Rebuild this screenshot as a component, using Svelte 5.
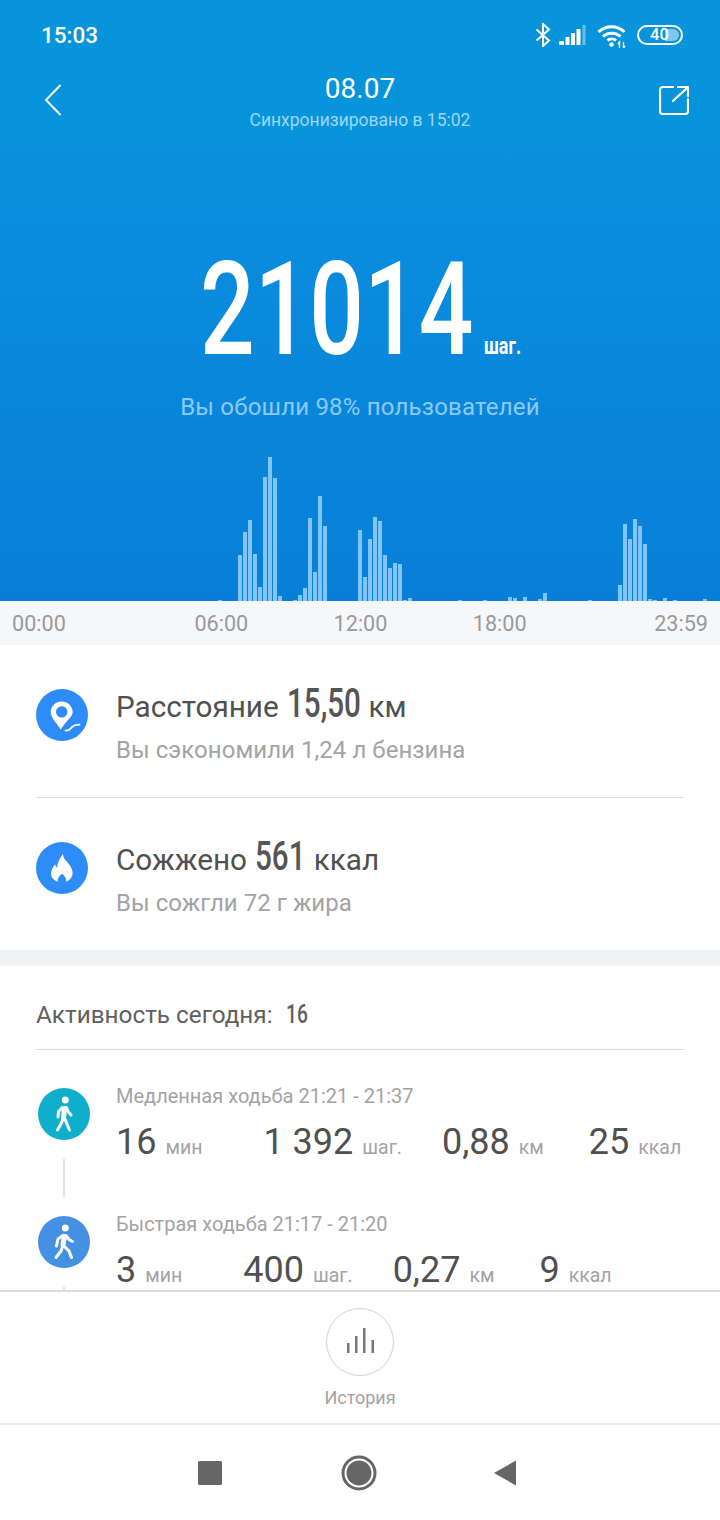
<script>
  const heights = {43:1,47:46,48:69,49:81,50:47,51:14,52:124,53:144,54:123,55:5,58:1,59:6,60:13,61:83,62:29,63:105,64:75,71:71,72:24,73:62,74:84,75:80,76:46,77:33,78:38,79:37,80:1,81:3,91:1,96:1,101:4,102:3,104:4,107:2,108:8,117:1,123:16,124:77,125:62,126:82,127:75,128:57,129:2,130:1,132:3,134:1,140:2};
  const bars = Array.from({ length: 141 }, (_, i) => heights[i] || 0);
  const activities = [
    { name: 'Медленная ходьба 21:21 - 21:37', color: 'teal', fast: false, stats: [['16','мин'],['1 392','шаг.'],['0,88','км'],['25','ккал']] },
    { name: 'Быстрая ходьба 21:17 - 21:20', color: 'blue', fast: true, stats: [['3','мин'],['400','шаг.'],['0,27','км'],['9','ккал']] }
  ];
</script>

<div class="page">
  <header class="top">
    <div class="status">
      <span class="clock">15:03</span>
      <div class="sys">
        <svg class="bt" width="16" height="24" viewBox="0 0 16 24" fill="none" stroke="#fff" stroke-width="2"><path d="M1.500 6.500 14 17.500 8 23V1l6 5.500L1.500 17.500"/></svg>
        <svg class="sig" width="27" height="20" viewBox="0 0 27 20" fill="#fff"><rect x="0" y="16" width="5" height="4" rx="1"/><rect x="6.500" y="12" width="4" height="8"/><rect x="12" y="8" width="4" height="12"/><rect x="17.500" y="4" width="4" height="16"/><rect x="23.500" y="0" width="3" height="20" opacity=".4"/></svg>
        <svg class="wifi" width="30" height="24" viewBox="0 0 30 24" fill="none" stroke="#fff" stroke-width="3"><path d="M1.500 8c7-7 19-7 26 0"/><path d="M6 12.500c4.500-4.500 13-4.500 17.500 0"/><path d="M10.500 16.500c2.300-2 6-2 8.500 0"/><circle cx="14.500" cy="20.500" r="2.200" fill="#fff" stroke="none"/><path d="M22.500 24v-6l-1.500 2M26.500 18v6l1.500-2" stroke-width="1.300"/></svg>
        <div class="batt"><i></i><b>40</b></div>
      </div>
    </div>
    <div class="nav">
      <svg class="back" width="18" height="32" viewBox="0 0 18 32" fill="none" stroke="#fff" stroke-width="2"><path d="M16.500 1 2 16l14.500 15"/></svg>
      <div class="titles">
        <div class="date">08.07</div>
        <div class="sync">Синхронизировано в 15:02</div>
      </div>
      <svg class="share" width="30" height="30" viewBox="0 0 30 30" fill="none" stroke="#fff" stroke-width="2.200" stroke-linecap="round" stroke-linejoin="round"><path d="M14 2H4a3 3 0 0 0-3 3v21a3 3 0 0 0 3 3h22a3 3 0 0 0 3-3v-12"/><path d="M14 16 29 2M19 2h10v9"/></svg>
    </div>
  </header>

  <section class="hero">
    <div class="total">
      <span class="big">21014</span>
      <span class="unit">шаг.</span>
    </div>
    <p class="beat">Вы обошли 98% пользователей</p>
    <div class="chart">
      {#each bars as h}
        <i class="bar" style="height:{h}px"></i>
      {/each}
    </div>
  </section>

  <div class="axis">
    <span>00:00</span>
    <div class="mid"><span>06:00</span><span>12:00</span><span>18:00</span></div>
    <span>23:59</span>
  </div>

  <main class="scroll">
    <section class="summary">
      <div class="row">
        <div class="ic">
          <svg width="52" height="52" viewBox="0 0 52 52"><circle cx="26" cy="26" r="26" fill="#2e8cf8"/><path fill="#fff" fill-rule="evenodd" d="M25.700 12.500c-6 0-11 4.800-11 10.500 0 6 6 11 10 17.500 1.500-2.500 3.500-5 5.500-7.500 3-3.500 6.500-6.500 6.500-10 0-5.700-5-10.500-11-10.500zm0 4.700a5.700 5.700 0 1 1 0 11.400 5.700 5.700 0 0 1 0-11.400z"/><path fill="none" stroke="#2e8cf8" stroke-width="5" d="M29.500 41.500c3 1 4.500-1.500 6.500-3.500 1.500-1.500 3-2.500 7.500-2.300"/><path fill="none" stroke="#fff" stroke-width="1.800" stroke-linecap="round" d="M29.500 41.500c3 1 4.500-1.500 6.500-3.500 1.500-1.500 3-2.500 7.500-2.300"/></svg>
        </div>
        <div>
          <div class="head">Расстояние <span class="cond w-km">15,50</span> км</div>
          <div class="note">Вы сэкономили 1,24 л бензина</div>
        </div>
      </div>
      <div class="rule"></div>
      <div class="row">
        <div class="ic">
          <svg width="52" height="52" viewBox="0 0 52 52"><circle cx="26" cy="26" r="26" fill="#2e8cf8"/><path fill="#fff" d="M27 12c0 5 4 7 7 11.500 3 4.500 3.500 9.500 1 12.500-1 1.500-3 3-5 3.800 .8-3.500-1.500-6-4-8-2.500 2-4.800 4.500-4 8-2.500-.8-4.500-2-5.800-4-2.300-4-1-9 3-13.500 .2 1.500.8 2.800 2 3.500C21 21 24 16 27 12z"/></svg>
        </div>
        <div>
          <div class="head">Сожжено <span class="cond w-kc">561</span> ккал</div>
          <div class="note">Вы сожгли 72 г жира</div>
        </div>
      </div>
    </section>

    <section class="activity">
      <div class="act-head">Активность сегодня: <span class="cond w-16">16</span></div>
      <div class="list">
        {#each activities as a, i}
          <div class="item">
            <div class="rail">
              <svg class="walker" width="52" height="52" viewBox="0 0 52 52">
                <circle cx="26" cy="26" r="26" fill={a.color === 'teal' ? '#0fafcb' : '#4490e2'}/>
                <circle cx="27.300" cy="12" r="3.500" fill="#fff"/>
                {#if a.fast}
                  <path fill="none" stroke="#fff" stroke-width="5" stroke-linecap="round" d="M26.500 20.500l-1.500 8"/>
                  <path fill="none" stroke="#fff" stroke-width="3" stroke-linecap="round" stroke-linejoin="round" d="M25 29l-2 6-5 6.500M26 30l5 5 2.500 6.500M25 19.500l-5 3.500-1.500 7M28 19.500l3 4 3.500 2"/>
                {:else}
                  <path fill="none" stroke="#fff" stroke-width="5" stroke-linecap="round" d="M26.500 20.500l-1 9"/>
                  <path fill="none" stroke="#fff" stroke-width="3" stroke-linecap="round" stroke-linejoin="round" d="M25 30l-1.500 5-4 7M27 31l2 5 2.500 6M24.500 19.500l-4 4-.5 5.500M28.500 19.500l1.500 4 3 3.500"/>
                {/if}
              </svg>
              <div class="link"></div>
            </div>
            <div class="body">
              <div class="name">{a.name}</div>
              <div class="stats">
                {#each a.stats as s}
                  <div class="stat"><span class="val">{s[0]}</span><span class="lab">{s[1]}</span></div>
                {/each}
              </div>
            </div>
          </div>
        {/each}
      </div>
    </section>
  </main>

  <div class="history">
    <div class="hist-btn">
      <svg class="hist-ic" width="27" height="25" viewBox="0 0 27 25" fill="#777"><rect x="0" y="15" width="2.500" height="10"/><rect x="8" y="8" width="2.500" height="17"/><rect x="16" y="0" width="2.500" height="25"/><rect x="24.500" y="12" width="2.500" height="13"/></svg>
    </div>
    <div class="hist-label">История</div>
  </div>

  <nav class="sysnav">
    <svg width="24" height="24" viewBox="0 0 24 24" fill="#666"><rect width="24" height="24" rx="1.500"/></svg>
    <svg width="36" height="36" viewBox="0 0 36 36"><circle cx="18" cy="18" r="16" fill="none" stroke="#666" stroke-width="3"/><circle cx="18" cy="18" r="12.500" fill="#666"/></svg>
    <svg width="24" height="28" viewBox="0 0 24 28" fill="#666"><path d="M23 1.500v25L1 14z"/></svg>
  </nav>
</div>

<style>
  :global(body) { margin: 0; background: #fff; }
  .page { width: 720px; height: 1520px; display: flex; flex-direction: column; font-family: Roboto, "Noto Sans", sans-serif; overflow: hidden; }

  .top { height: 145px; background: #0894da; color: #fff; box-sizing: border-box; flex: none; }
  .status { height: 70px; display: flex; align-items: center; justify-content: space-between; padding: 0 37px 0 41px; }
  .clock { font-size: 22.500px; font-weight: 500; }
  .sys { display: flex; align-items: center; }
  .bt { margin-right: 8px; }
  .sig { margin-right: 11px; }
  .wifi { margin-right: 10px; margin-top: 1px; }
  .batt { width: 46px; height: 20px; box-sizing: border-box; border: 2px solid #fff; border-radius: 10px; position: relative; display: flex; align-items: center; padding-left: 11px; overflow: hidden; }
  .batt i { position: absolute; right: 2px; top: 2px; bottom: 2px; width: 14px; border-radius: 0 7px 7px 0; background: #7cc8f2; }
  .batt b { position: relative; font-size: 16.500px; line-height: 16px; font-weight: 500; }

  .nav { display: flex; justify-content: space-between; align-items: center; padding: 0 31px 0 44px; height: 60px; }
  .back { flex: none; }
  .titles { text-align: center; padding-top: 3px; margin-left: -1px; }
  .date { font-size: 28px; line-height: 36px; }
  .sync { font-size: 17.500px; line-height: 24px; color: #9cd6f7; margin-top: 1px; }
  .share { flex: none; }

  .hero { height: 456px; flex: none; background: linear-gradient(#0a90df, #087fd7); display: flex; flex-direction: column; align-items: center; color: #fff; }
  .total { display: flex; align-items: baseline; margin-top: 105px; height: 120px; }
  .big { display: inline-block; width: 272px; font-size: 130px; line-height: 120px; font-weight: 500; transform: scaleX(.74); transform-origin: left; white-space: nowrap; }
  .unit { display: inline-block; width: 37px; margin-left: 12px; font-size: 23px; font-weight: 700; transform: scaleX(.78); transform-origin: left; white-space: nowrap; }
  .beat { margin: 22px 0 0; font-size: 24px; line-height: 30px; color: #8ccaf5; letter-spacing: .2px; }
  .chart { margin-top: auto; align-self: stretch; height: 145px; padding-left: 3px; display: flex; align-items: flex-end; gap: 1px; }
  .bar { flex: none; width: 4px; background: #80c4f8; }

  .axis { height: 44px; flex: none; box-sizing: border-box; padding: 0 12px; background: #f6f7f9; display: flex; align-items: center; justify-content: space-between; color: #999; font-size: 21.600px; }
  .mid { display: flex; gap: 85.400px; margin-left: 1px; }

  .scroll { flex: 1; min-height: 0; overflow: hidden; border-bottom: 2px solid #dcdcdc; }
  .summary { padding: 0 36px; height: 321px; box-sizing: border-box; border-bottom: 16px solid #eff1f2; }
  .row { display: flex; align-items: flex-start; height: 152px; box-sizing: border-box; padding-top: 44px; }
  .ic { width: 80px; height: 52px; flex: none; }
  .head { font-size: 29.700px; line-height: 36px; color: #505050; margin-top: -3px; white-space: nowrap; }
  .note { font-size: 24px; line-height: 30px; color: #a3a3a3; margin-top: 10px; letter-spacing: .05px; }
  .rule { height: 1px; background: #dcdcdc; }
  .cond { display: inline-block; font-size: 40px; font-weight: 500; line-height: 36px; margin-left: 1px; transform: scaleX(.74); transform-origin: left; color: #555; vertical-align: baseline; }
  .w-km { width: 74px; }
  .w-kc { width: 51px; }
  .w-16 { width: 23px; font-size: 26px; color: #606060; margin-left: 7px; }

  .activity { padding: 0 36px; }
  .act-head { height: 84px; box-sizing: border-box; border-bottom: 1px solid #dcdcdc; font-size: 24.300px; line-height: 98px; color: #606060; white-space: nowrap; }
  .item { display: flex; height: 128px; padding-top: 38px; box-sizing: border-box; }
  .rail { width: 80px; padding-left: 2px; flex: none; display: flex; flex-direction: column; box-sizing: border-box; }
  .walker { flex: none; }
  .link { width: 2px; height: 38px; background: #e2e2e2; margin: 19px 0 0 25px; flex: none; }
  .name { font-size: 20px; line-height: 20px; color: #a3a3a3; margin-top: -2px; white-space: nowrap; }
  .stats { display: flex; align-items: baseline; margin-top: 14px; white-space: nowrap; }
  .stat:nth-child(2) { margin-left: 61px; }
  .stat:nth-child(3) { margin-left: 40px; }
  .stat:nth-child(4) { margin-left: 45px; }
  .val { font-size: 36px; line-height: 44px; color: #505050; }
  .lab { font-size: 19.500px; color: #a3a3a3; margin-left: 9px; }

  .history { height: 133px; flex: none; box-sizing: border-box; border-bottom: 2px solid #ececec; display: flex; flex-direction: column; align-items: center; padding-top: 16px; }
  .hist-btn { width: 68px; height: 68px; box-sizing: border-box; border: 1px solid #d2d2d2; border-radius: 50%; display: flex; align-items: center; justify-content: center; }
  .hist-ic { margin-bottom: 3px; }
  .hist-label { margin-top: 10px; font-size: 18px; line-height: 24px; color: #a3a3a3; }

  .sysnav { flex: none; height: 95px; display: flex; align-items: center; padding-left: 198px; }
  .sysnav svg:nth-child(2) { margin-left: 119px; }
  .sysnav svg:nth-child(3) { margin-left: 116px; }
</style>
